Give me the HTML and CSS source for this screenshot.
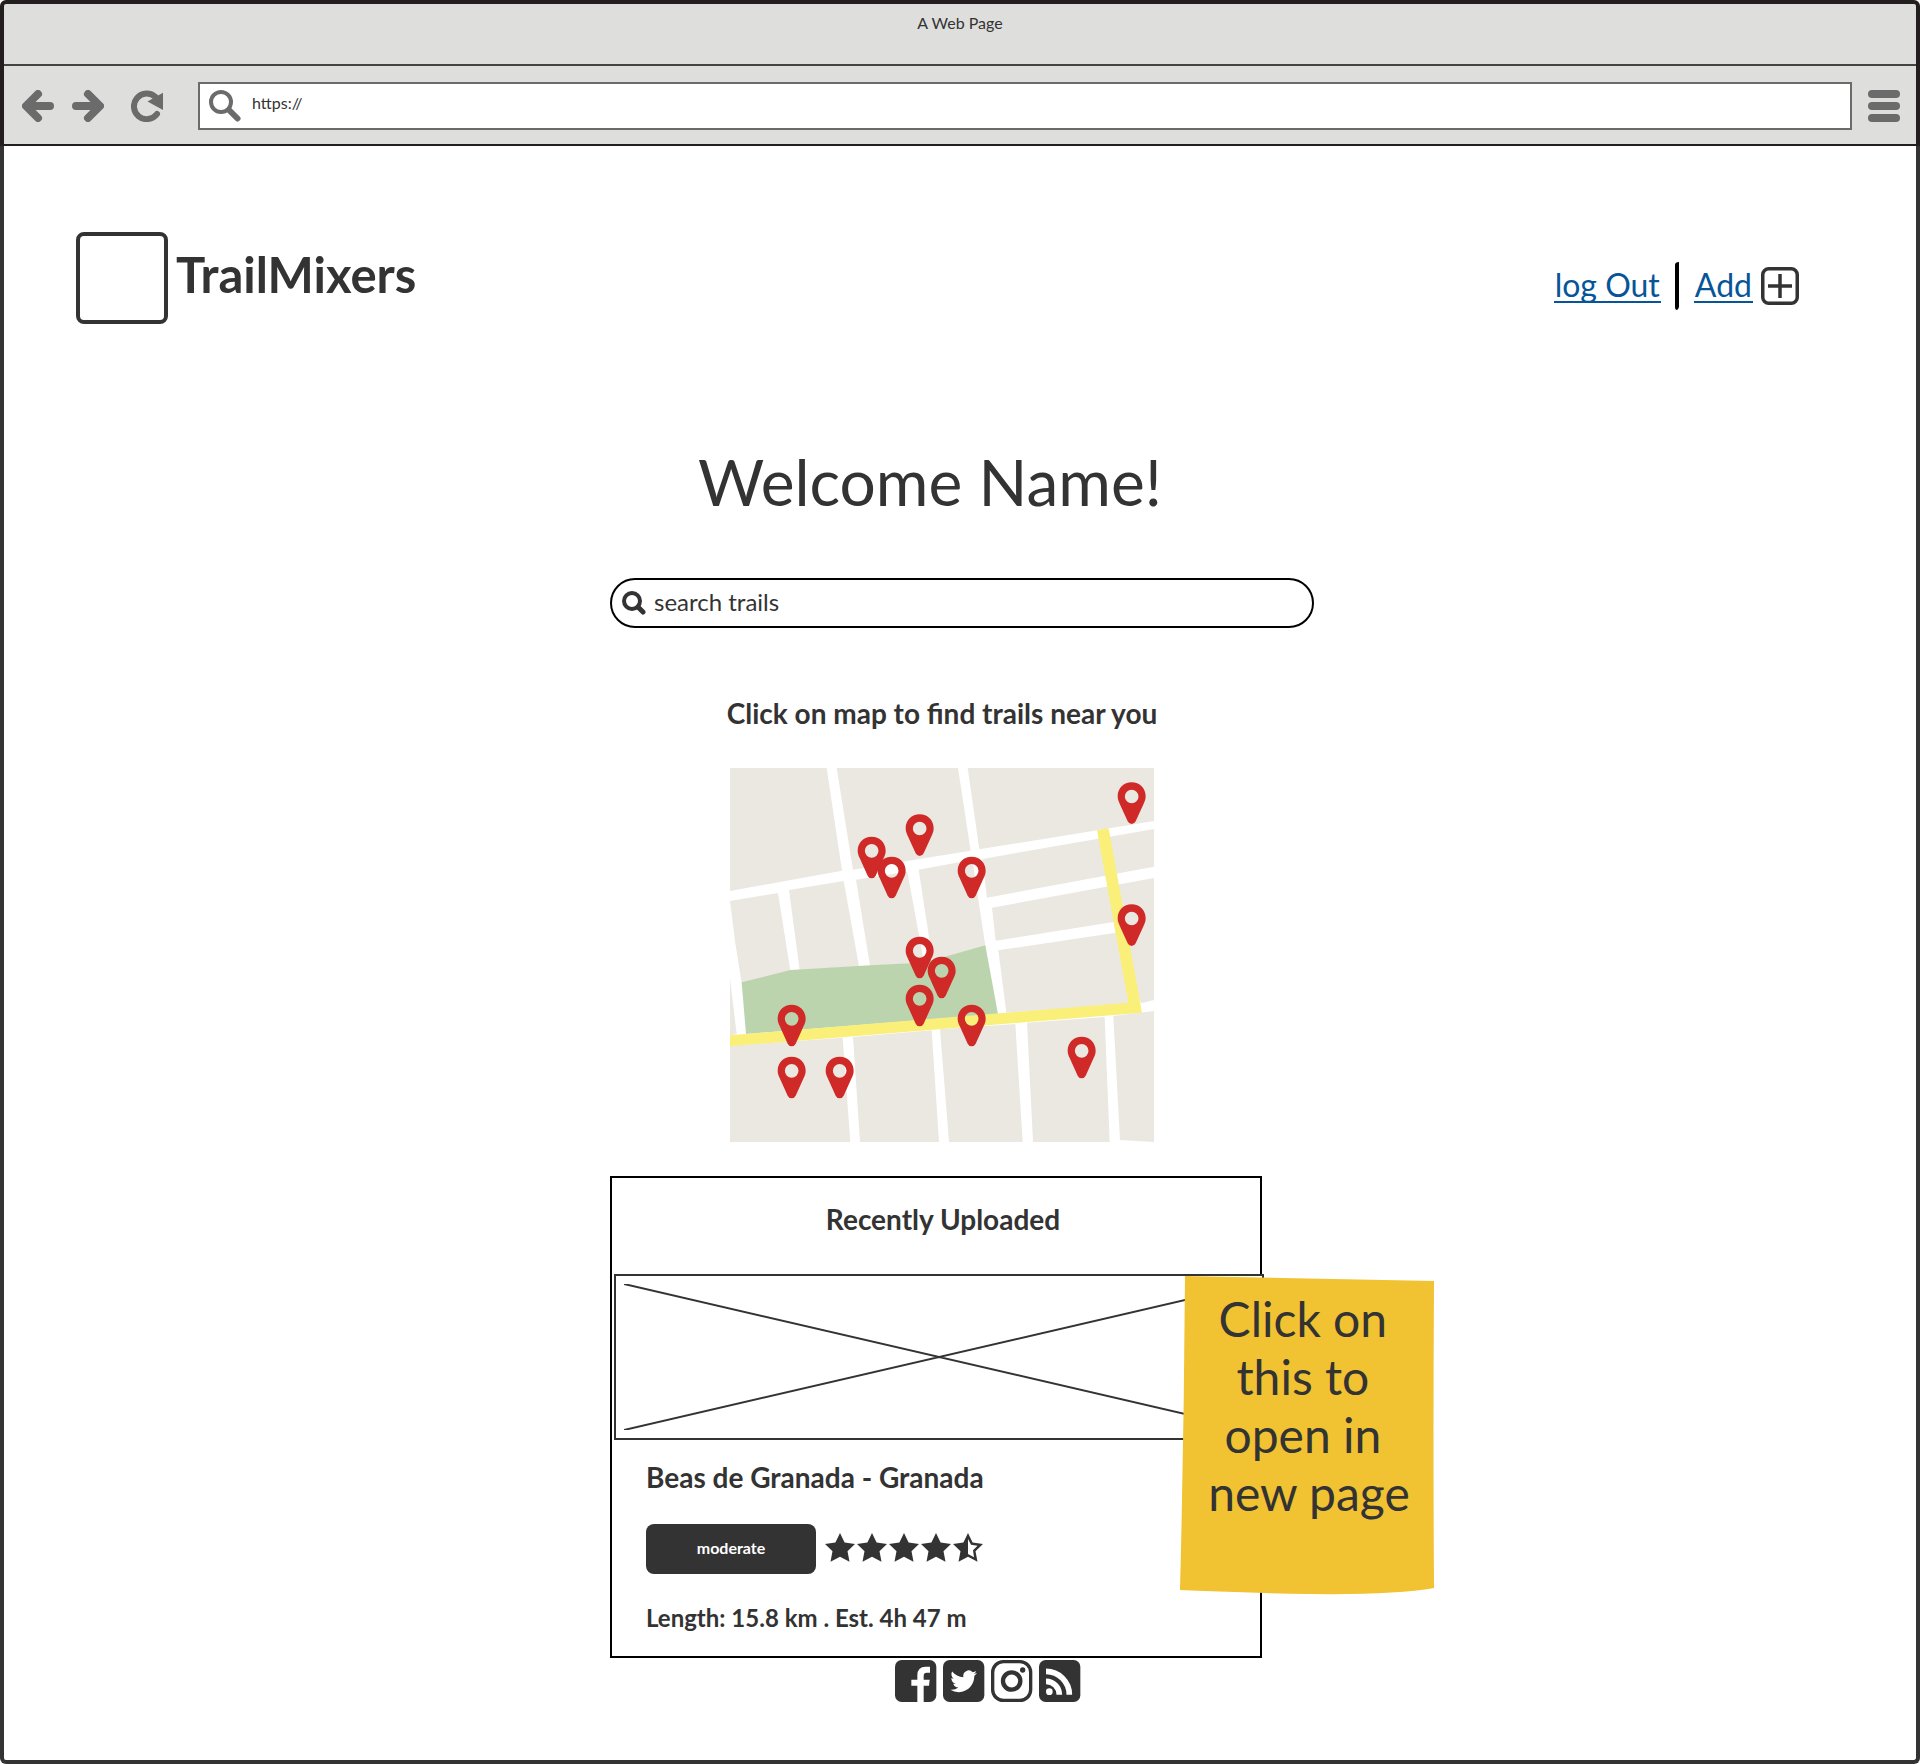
FILE: index.html
```html
<!DOCTYPE html>
<html lang="en">
<head>
<meta charset="utf-8">
<meta name="viewport" content="width=device-width, initial-scale=1">
<title>TrailMixers</title>
<link rel="stylesheet" href="styles.css">
</head>
<body>
<div class="browser">
  <div class="chrome">
    <div class="titlebar">A Web Page</div>
    <div class="toolbar">
      <button class="tool back" type="button" aria-label="Back">
        <svg width="32" height="32" viewBox="0 0 32 32"><path d="M28 16H5M16 4L4 16L16 28" fill="none" stroke="#6b6b6b" stroke-width="8" stroke-linecap="round" stroke-linejoin="round"/></svg>
      </button>
      <button class="tool forward" type="button" aria-label="Forward">
        <svg width="32" height="32" viewBox="0 0 32 32"><path d="M4 16H27M16 4L28 16L16 28" fill="none" stroke="#6b6b6b" stroke-width="8" stroke-linecap="round" stroke-linejoin="round"/></svg>
      </button>
      <button class="tool reload" type="button" aria-label="Reload">
        <svg width="32" height="32" viewBox="0 0 32 32"><path d="M26 24A12.800 12.800 0 1 1 24.500 7" fill="none" stroke="#6b6b6b" stroke-width="6" stroke-linecap="round"/><path d="M32 2.700V20L16.500 11.500Z" fill="#6b6b6b"/></svg>
      </button>
      <label class="address">
        <svg width="32" height="32" viewBox="0 0 32 32" fill="none" stroke="#6b6b6b"><circle cx="12" cy="12" r="10" stroke-width="4"/><path d="M20 20L28.500 28.500" stroke-width="6" stroke-linecap="round"/></svg>
        <input type="text" value="https://" aria-label="Address">
      </label>
      <button class="tool" type="button" aria-label="Menu">
        <svg width="32" height="32" viewBox="0 0 32 32" fill="#6b6b6b"><rect width="32" height="8" rx="4"/><rect y="12" width="32" height="8" rx="4"/><rect y="24" width="32" height="8" rx="4"/></svg>
      </button>
    </div>
  </div>

  <div class="page">
    <header class="site-header">
      <div class="brand">
        <div class="logo"></div>
        <div class="brand-name">TrailMixers</div>
      </div>
      <nav class="account">
        <a class="link" href="#">log Out</a>
        <svg class="divider" width="4" height="48" viewBox="0 0 4 48"><path d="M0 3Q0 0 4 0V45Q3 48 2 48Q0 48 0 45Z"/></svg>
        <a class="link" href="#">Add</a>
        <svg class="plus" width="38" height="38" viewBox="0 0 38 38" fill="none" stroke="#333"><rect x="1.750" y="1.750" width="34.500" height="34.500" rx="6" stroke-width="3.500"/><path d="M7 19H31M19 7V31" stroke-width="3.500"/></svg>
      </nav>
    </header>

    <main class="content">
      <h1 class="welcome">Welcome Name!</h1>

      <form class="search">
        <svg width="24" height="24" viewBox="0 0 24 24" fill="none" stroke="#333" aria-hidden="true"><circle cx="10" cy="10" r="8" stroke-width="4"/><path d="M16 16L21 21" stroke-width="5" stroke-linecap="round"/></svg>
        <input type="text" value="search trails" aria-label="Search trails">
      </form>

      <h2 class="map-title">Click on map to find trails near you</h2>
      <a class="map" href="#" aria-label="Trail map">
        <svg viewBox="30 24 1272 1122" width="424" height="374">
          <defs>
            <path id="pin" fill="#cf2a28" fill-rule="evenodd" d="M0 0C24 0 42 18 42 42C42 51 39 58 36 64L12 117Q8 125 0 125Q-8 125 -12 117L-36 64C-39 58 -42 51 -42 42C-42 18 -24 0 0 0ZM0 22A20.500 20.500 0 1 0 0 63A20.500 20.500 0 1 0 0 22Z"/>
          </defs>
          <!-- city blocks -->
          <g fill="#ebe8e1">
            <path d="M30 24H320L366 332L30 393Z"/>
            <path d="M350 24H714L752 272L399 329Z"/>
            <path d="M743 24H1302V183L778 268Z"/>
            <path d="M30 423L174 399L211 632L65 670Q44 550 30 423Z"/>
            <path d="M207 390L371 363L417 619L239 630Z"/>
            <path d="M408 359L562 335L612 608L450 617Z"/>
            <path d="M596 329L757 299L796 558L680 590L638 602Z"/>
            <path d="M787 297L1302 207V320L801 413Z"/>
            <path d="M816 443L1302 354V720L1264 730L1200 600L1181 486L827 542Z"/>
            <path d="M835 571L1187 518L1228 732L859 758Z"/>
            <path d="M30 655L50 822L30 827Z"/>
            <path d="M30 857L368 833L391 1146H30Z"/>
            <path d="M399 831L635 811L657 1146H420Z"/>
            <path d="M660 808L886 792L908 1146H687Z"/>
            <path d="M921 788L1154 771L1169 1146H939Z"/>
            <path d="M1180 768L1302 753V1146L1200 1140Z"/>
          </g>
          <path fill="#bcd4ae" d="M65 667L211 630L450 616L600 608L680 589L796 556L834 762L78 822Z"/>
          <path fill="#faef78" d="M30 826L1225 728L1131 211L1166 205L1266 758L30 859Z"/>
          <use href="#pin" x="1235" y="67"/>
          <use href="#pin" x="599" y="163"/>
          <use href="#pin" x="455" y="230"/>
          <use href="#pin" x="515" y="290"/>
          <use href="#pin" x="755" y="290"/>
          <use href="#pin" x="1235" y="433"/>
          <use href="#pin" x="599" y="530"/>
          <use href="#pin" x="665" y="590"/>
          <use href="#pin" x="599" y="674"/>
          <use href="#pin" x="215" y="734"/>
          <use href="#pin" x="755" y="734"/>
          <use href="#pin" x="1085" y="830"/>
          <use href="#pin" x="215" y="890"/>
          <use href="#pin" x="359" y="890"/>
        </svg>
      </a>

      <section class="card">
        <h2 class="card-title">Recently Uploaded</h2>
        <div class="photo">
          <svg width="100%" height="100%" viewBox="0 0 630 146" preserveAspectRatio="none"><path d="M0 0L630 146M0 146L630 0" stroke="#333" stroke-width="2"/></svg>
        </div>
        <div class="details">
          <h3 class="trail">Beas de Granada - Granada</h3>
          <div class="rating">
            <button class="level" type="button">moderate</button>
            <svg class="stars" width="158" height="29" viewBox="0 0 158 29" fill="#333" role="img" aria-label="4.5 out of 5 stars">
              <defs><path id="star" d="M15 0L19.600 9.400L30 11L22.500 18.300L24.500 28.800L15 23.800L5.500 28.800L7.500 18.300L0 11L10.400 9.400Z"/></defs>
              <use href="#star"/><use href="#star" x="32"/><use href="#star" x="64"/><use href="#star" x="96"/><use href="#star" x="128"/>
              <path fill="#fff" d="M143 6L146 11.800L152.500 12.800L148 17.300L149 24.200L143 21Z"/>
            </svg>
          </div>
          <p class="stats">Length: 15.8 km . Est. 4h 47 m</p>
        </div>

        <aside class="note">
          <svg class="paper" viewBox="0 0 254 320" width="254" height="320" aria-hidden="true"><path fill="#f1c232" d="M5 1L254 6Q253 160 254 313Q215 320 130 319Q70 318 0 315Q4 160 5 1Z"/></svg>
          <p class="note-text">Click on&nbsp;<br>this to&nbsp;<br>open in&nbsp;<br>new page</p>
        </aside>
      </section>

      <footer class="social">
        <a href="#" aria-label="Facebook"><svg width="42" height="42" viewBox="0 0 126 126"><rect width="124" height="126" rx="20" fill="#333"/><path fill="#fff" d="M67 126V77H49V59H67V46Q67 20 92 20H105V38H95Q86 38 86 47V59H104L102 77H86V126Z"/></svg></a>
        <a href="#" aria-label="Twitter"><svg width="42" height="42" viewBox="0 0 126 126"><rect width="124" height="126" rx="20" fill="#333"/><path fill="#fff" transform="translate(22 24) scale(3.33)" d="M23.953 4.570a10 10 0 01-2.825.775 4.958 4.958 0 002.163-2.723c-.951.555-2.005.959-3.127 1.184a4.920 4.920 0 00-8.384 4.482C7.690 8.095 4.067 6.130 1.640 3.162a4.822 4.822 0 00-.666 2.475c0 1.710.870 3.213 2.188 4.096a4.904 4.904 0 01-2.228-.616v.060a4.923 4.923 0 003.946 4.827 4.996 4.996 0 01-2.212.085 4.936 4.936 0 004.604 3.417 9.867 9.867 0 01-6.102 2.105c-.390 0-.779-.023-1.170-.067a13.995 13.995 0 007.557 2.209c9.053 0 13.998-7.496 13.998-13.985 0-.210 0-.420-.015-.630A9.935 9.935 0 0024 4.590z"/></svg></a>
        <a href="#" aria-label="Instagram"><svg width="42" height="42" viewBox="0 0 126 126" fill="none" stroke="#333"><rect x="5" y="5" width="114" height="116" rx="32" stroke-width="10"/><circle cx="62" cy="63" r="26" stroke-width="13"/><circle cx="95" cy="30" r="8" fill="#333" stroke="none"/></svg></a>
        <a href="#" aria-label="RSS"><svg width="42" height="42" viewBox="0 0 126 126"><rect width="124" height="126" rx="20" fill="#333"/><circle cx="31" cy="95" r="10" fill="#fff"/><path fill="none" stroke="#fff" stroke-width="17" d="M21 64A40 40 0 0 1 61 104M21 34A70 70 0 0 1 91 104"/></svg></a>
      </footer>
    </main>
  </div>
</div>
</body>
</html>
```

FILE: styles.css
```css
* {
  box-sizing: border-box;
}

body {
  margin: 0;
  background: #fff;
  color: #333;
  font-family: Lato, sans-serif;
  font-size: 16px;
}

h1, h2, h3, p {
  margin: 0;
}

svg {
  display: block;
  flex: none;
}

input {
  flex: 1;
  min-width: 0;
  padding: 0;
  border: 0;
  outline: 0;
  background: transparent;
  color: inherit;
  font: inherit;
}

button {
  padding: 0;
  border: 0;
  background: none;
  font: inherit;
}

.browser {
  display: flex;
  flex-direction: column;
  min-height: 100vh;
}

/* Window chrome */
.chrome {
  border: 4px solid #231f20;
  border-bottom-width: 2px;
  border-radius: 6px 6px 0 0;
  background: #dededc;
}

.titlebar {
  height: 62px;
  padding-top: 9px;
  border-bottom: 2px solid #444;
  line-height: 20px;
  text-align: center;
}

.toolbar {
  display: flex;
  align-items: center;
  height: 78px;
  padding: 2px 16px 0 18px;
}

.back {
  margin-right: 18px;
}

.forward {
  margin-right: 27px;
}

.reload {
  margin-right: 35px;
}

.address {
  display: flex;
  flex: 1;
  align-items: center;
  gap: 11px;
  height: 48px;
  margin-right: 16px;
  padding-left: 9px;
  border: 2px solid #6b6b6b;
  background: #fff;
}

.address input {
  height: 44px;
  padding-bottom: 8px;
}

/* Page */
.page {
  flex: 1;
  padding-top: 86px;
  padding-bottom: 58px;
  border: 4px solid #333;
  border-top: 0;
  border-radius: 0 0 6px 6px;
}

.site-header {
  display: flex;
  align-items: center;
  justify-content: space-between;
  padding: 0 117px 0 72px;
}

.brand {
  display: flex;
  align-items: center;
  gap: 8px;
}

.logo {
  width: 92px;
  height: 92px;
  border: 4px solid #333;
  border-radius: 8px;
}

.brand-name {
  padding-bottom: 8px;
  font-size: 49px;
  font-weight: 700;
  line-height: 58px;
}

.account {
  display: flex;
  align-items: center;
  padding-top: 16px;
}

.divider {
  margin: 0 15px 0 14px;
}

.plus {
  margin-left: 8px;
}

.link {
  padding: 0 1px;
  border-bottom: 2px solid #075598;
  color: #075598;
  font-size: 32px;
  line-height: 32px;
  text-decoration: none;
}

.content {
  width: 708px;
  max-width: 100%;
  margin: 0 auto;
  padding-left: 4px;
}

.welcome {
  margin-top: 118px;
  padding-right: 64px;
  font-size: 64px;
  font-weight: 400;
  line-height: 80px;
  text-align: center;
}

.search {
  display: flex;
  align-items: center;
  gap: 8px;
  height: 50px;
  margin-top: 56px;
  padding: 0 24px 0 10px;
  border: 2px solid #000;
  border-radius: 25px;
  font-size: 24px;
}

.search input {
  padding-bottom: 4px;
}

.map-title {
  margin-top: 68px;
  padding-right: 40px;
  font-size: 28px;
  line-height: 34px;
  text-align: center;
}

.map {
  display: block;
  width: 424px;
  margin: 38px 0 0 120px;
}

.card {
  position: relative;
  width: 652px;
  margin-top: 34px;
  padding: 24px 0;
  border: 2px solid #000;
}

.card-title {
  padding-left: 14px;
  font-size: 28px;
  line-height: 34px;
  text-align: center;
}

.photo {
  height: 166px;
  margin: 38px -4px 0 2px;
  padding: 8px;
  border: 2px solid #333;
  background: #fff;
}

.details {
  padding: 20px 34px 0;
}

.trail {
  font-size: 28px;
  line-height: 34px;
}

.rating {
  display: flex;
  align-items: center;
  gap: 9px;
  margin-top: 30px;
}

.level {
  width: 170px;
  height: 50px;
  padding-bottom: 3px;
  border-radius: 8px;
  background: #333;
  color: #fff;
  font-weight: 700;
}

.stars {
  margin-bottom: 4px;
}

.stats {
  margin-top: 29px;
  margin-bottom: -1px;
  font-size: 24px;
  font-weight: 700;
  line-height: 30px;
}

/* Sticky note pinned over the card */
.note {
  position: absolute;
  top: 97px;
  left: 568px;
  width: 258px;
}

.note-text {
  position: absolute;
  top: 15px;
  left: 0;
  width: 100%;
  font-size: 48px;
  line-height: 58px;
  text-align: center;
}

.social {
  display: flex;
  gap: 6px;
  margin: 2px 0 0 285px;
}
```
